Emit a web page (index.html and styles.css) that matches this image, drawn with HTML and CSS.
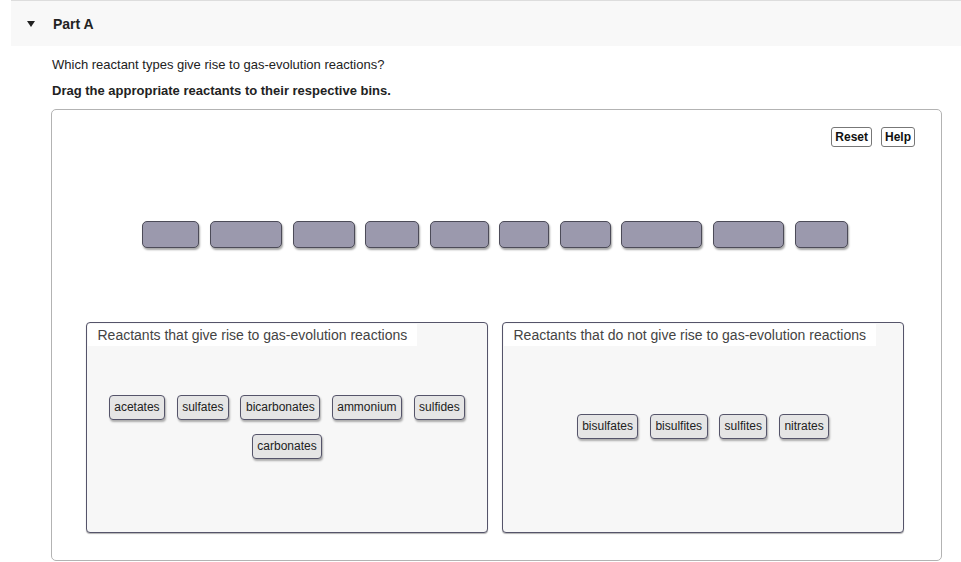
FILE: index.html
```html
<!DOCTYPE html>
<html>
<head>
<meta charset="utf-8">
<link rel="stylesheet" href="styles.css">
</head>
<body>
<div class="part-header">
  <span class="caret"></span>
  <span class="part-title">Part A</span>
</div>
<div class="content">
  <p class="prompt">Which reactant types give rise to gas-evolution reactions?</p>
  <p class="instruction">Drag the appropriate reactants to their respective bins.</p>
  <div class="box">
    <div class="toolbar">
      <button class="btn">Reset</button>
      <button class="btn">Help</button>
    </div>
    <div class="tiles">
      <span class="tile" style="width:57px"></span>
      <span class="tile" style="width:72px"></span>
      <span class="tile" style="width:62px"></span>
      <span class="tile" style="width:54px"></span>
      <span class="tile" style="width:59px"></span>
      <span class="tile" style="width:50px"></span>
      <span class="tile" style="width:51px"></span>
      <span class="tile" style="width:81px"></span>
      <span class="tile" style="width:71px"></span>
      <span class="tile" style="width:53px"></span>
    </div>
    <div class="bins">
      <div class="bin">
        <div class="bin-title">Reactants that give rise to gas-evolution reactions</div>
        <div class="chips">
          <span class="chip">acetates</span>
          <span class="chip">sulfates</span>
          <span class="chip">bicarbonates</span>
          <span class="chip">ammonium</span>
          <span class="chip">sulfides</span>
          <span class="chip">carbonates</span>
        </div>
      </div>
      <div class="bin">
        <div class="bin-title">Reactants that do not give rise to gas-evolution reactions</div>
        <div class="chips">
          <span class="chip">bisulfates</span>
          <span class="chip">bisulfites</span>
          <span class="chip">sulfites</span>
          <span class="chip">nitrates</span>
        </div>
      </div>
    </div>
  </div>
</div>
</body>
</html>
```
FILE: styles.css
```css
html, body {
  margin: 0;
  padding: 0;
  background: #fff;
  font-family: "Liberation Sans", Arial, sans-serif;
  color: #222;
  overflow: hidden;
}

.part-header {
  margin-left: 11px;
  border-top: 1px solid #dddddd;
  height: 45px;
  background: #f8f8f8;
  display: flex;
  align-items: center;
  padding-left: 16px;
}

.caret {
  width: 0;
  height: 0;
  border-left: 4.5px solid transparent;
  border-right: 4.5px solid transparent;
  border-top: 6px solid #222;
  margin-right: 18px;
}

.part-title {
  font-size: 14px;
  font-weight: bold;
  color: #222;
}

.content {
  padding-left: 51px;
}

.prompt,
.instruction {
  margin: 11px 0 0 1px;
  font-size: 13px;
  line-height: 16px;
  color: #222;
}

.instruction {
  margin-top: 10px;
  font-weight: bold;
}

.box {
  margin-top: 10px;
  width: 891px;
  height: 452px;
  box-sizing: border-box;
  border: 1px solid #b3b3b3;
  border-radius: 5px;
  padding-top: 17px;
}

.toolbar {
  display: flex;
  justify-content: flex-end;
  gap: 9px;
  padding-right: 26px;
}

.btn {
  font-family: "Liberation Sans", Arial, sans-serif;
  font-size: 12px;
  font-weight: bold;
  color: #111;
  background: #fff;
  border: 1px solid #777;
  border-radius: 3px;
  height: 20px;
  padding: 0 3px;
  line-height: 18px;
}

.tiles {
  display: flex;
  justify-content: center;
  gap: 10.6px;
  margin-top: 74px;
  padding-right: 3px;
}

.tile {
  display: block;
  height: 27px;
  box-sizing: border-box;
  background: #9b99ad;
  border: 1.5px solid #4c4b58;
  border-radius: 5px;
  box-shadow: 1px 2px 2px rgba(0, 0, 0, 0.35);
}

.bins {
  display: flex;
  gap: 14px;
  margin-top: 74px;
  padding-left: 34px;
}

.bin {
  width: 402px;
  height: 211px;
  box-sizing: border-box;
  background: #f7f7f7;
  border: 1.5px solid #55546a;
  border-radius: 4px;
  box-shadow: 0 1px 1px rgba(0, 0, 0, 0.3);
  display: flex;
  flex-direction: column;
  align-items: flex-start;
}

.bin-title {
  margin: 0.5px 0 0 0.5px;
  background: #fff;
  font-size: 14px;
  line-height: 22px;
  height: 22px;
  padding: 0 10px;
  color: #444;
}

.chips {
  flex: 1;
  align-self: stretch;
  display: flex;
  flex-wrap: wrap;
  justify-content: center;
  align-content: center;
  column-gap: 11.5px;
  row-gap: 14px;
  padding: 0 16px 24px;
}

.chip {
  display: block;
  height: 25px;
  box-sizing: border-box;
  line-height: 22px;
  font-size: 12px;
  color: #222;
  background: #e5e5e5;
  border: 1.5px solid #55546a;
  border-radius: 4px;
  padding: 0 4.5px;
  box-shadow: 1px 2px 2px rgba(0, 0, 0, 0.3);
}
```
